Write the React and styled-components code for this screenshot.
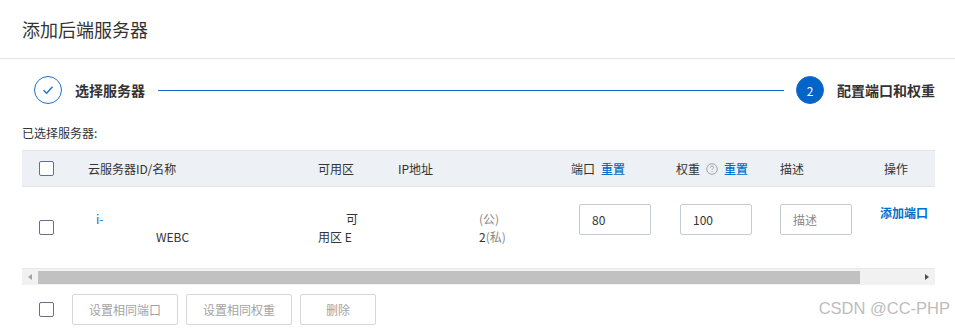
import React from "react";
import styled, { createGlobalStyle } from "styled-components";

const GlobalStyle = createGlobalStyle`
  body {
    margin: 0;
    background: #fff;
    font-family: "Noto Sans CJK SC", "Liberation Sans", sans-serif;
    color: #333;
  }
`;

const Page = styled.div`
  position: relative;
  width: 955px;
  height: 328px;
  overflow: hidden;
`;

const TitleBar = styled.div`
  height: 58px;
  display: flex;
  align-items: center;
  padding-left: 22px;
  border-bottom: 1px solid #e3e3e3;
  font-size: 18px;
  color: #333;
`;

const Content = styled.div`
  padding: 0 20px 0 22px;
`;

const Steps = styled.div`
  display: flex;
  align-items: center;
  height: 28px;
  margin-top: 17px;
  padding-left: 12px;
`;

const StepCircle = styled.div`
  width: 28px;
  height: 28px;
  box-sizing: border-box;
  border-radius: 50%;
  border: 1px solid #1a6fce;
  background: ${(p) => (p.$active ? "#0064c8" : "#fff")};
  color: #fff;
  font-size: 12px;
  display: flex;
  align-items: center;
  justify-content: center;
  flex-shrink: 0;
`;

const StepLabel = styled.span`
  margin-left: 13px;
  font-size: 14px;
  font-weight: 600;
  color: #333;
  white-space: nowrap;
`;

const StepLine = styled.div`
  flex: 1;
  height: 1px;
  background: #0a6cc8;
  margin: 0 12px 0 13px;
`;

const Caption = styled.div`
  margin-top: 20px;
  font-size: 12px;
  line-height: 18px;
`;

const Table = styled.div`
  margin-top: 8px;
`;

const Row = styled.div`
  display: grid;
  grid-template-columns: 58px 230px 80px 173px 105px 104px 100px 63px;
  height: ${(p) => (p.$head ? "37px" : "81px")};
  box-sizing: border-box;
  background: ${(p) => (p.$head ? "#edf0f5" : "#fff")};
  border-top: ${(p) => (p.$head ? "1px solid #e2e6eb" : "none")};
  border-bottom: ${(p) => (p.$head ? "1px solid #e2e6eb" : "none")};
  font-size: 12px;
`;

const Cell = styled.div`
  display: flex;
  flex-direction: column;
  justify-content: ${(p) => (p.$top ? "flex-start" : "center")};
  padding-top: ${(p) => (p.$top ? "17px" : "0")};
  padding-left: ${(p) => p.$pad || 8}px;
  white-space: nowrap;
`;

const HeadCell = styled.div`
  display: flex;
  align-items: center;
  padding-left: ${(p) => p.$pad || 8}px;
  gap: 6px;
  white-space: nowrap;
  color: #333;
`;

const Checkbox = styled.span`
  display: block;
  width: 15px;
  height: 15px;
  box-sizing: border-box;
  border: 1px solid #5e7190;
  border-radius: 2px;
  background: #fff;
  margin-left: 17px;
`;

const CheckCell = styled.div`
  display: flex;
  align-items: center;
`;

const Link = styled.span`
  color: #0070cc;
  font-weight: ${(p) => (p.$bold ? 700 : 500)};
  cursor: pointer;
`;

const Line = styled.div`
  line-height: 18px;
  padding-left: ${(p) => p.$indent || 0}px;
  color: ${(p) => p.$color || "#333"};
`;

const Muted = styled.span`
  color: #888;
`;

const Input = styled.input`
  width: 72px;
  height: 31px;
  box-sizing: border-box;
  border: 1px solid #c5ccd6;
  border-radius: 2px;
  padding: 0 12px;
  font-size: 12px;
  font-family: inherit;
  color: #333;
  outline: none;
  &::placeholder {
    color: #888;
  }
`;

const ScrollBar = styled.div`
  display: flex;
  height: 17px;
  background: #f1f1f1;
  border-top: 1px solid #e8e8e8;
  box-sizing: border-box;
`;

const ScrollArrow = styled.div`
  width: 16px;
  display: flex;
  align-items: center;
  justify-content: center;
  &::after {
    content: "";
    border-top: 3px solid transparent;
    border-bottom: 3px solid transparent;
    ${(p) =>
      p.$right
        ? "border-left: 4px solid #505050;"
        : "border-right: 4px solid #a3a3a3;"}
  }
`;

const ScrollTrack = styled.div`
  flex: 1;
  display: flex;
  align-items: center;
`;

const Thumb = styled.div`
  width: 822px;
  height: 13px;
  background: #c1c1c1;
`;

const Footer = styled.div`
  display: flex;
  align-items: center;
  margin-top: 9px;
  gap: 8px;
`;

const FooterCheck = styled(Checkbox)`
  margin-right: 10px;
`;

const GhostButton = styled.button`
  width: ${(p) => p.$w}px;
  height: 31px;
  border: 1px solid #d7d7d7;
  border-radius: 2px;
  background: #fff;
  color: #a3a3a3;
  font-size: 12px;
  font-family: inherit;
  padding: 0;
`;

const Watermark = styled.div`
  position: absolute;
  right: 5px;
  top: 299px;
  font-family: "Liberation Sans", sans-serif;
  font-size: 16.5px;
  color: #bdbdbd;
  white-space: nowrap;
`;

const CheckIcon = () => (
  <svg width="12" height="10" viewBox="0 0 12 10" fill="none">
    <path d="M1.5 5.2 L4.6 8.2 L10.5 1.8" stroke="#1a6fce" strokeWidth="1.4" />
  </svg>
);

const HelpIcon = () => (
  <svg width="12" height="12" viewBox="0 0 12 12" fill="none">
    <circle cx="6" cy="6" r="5.3" stroke="#9a9a9a" strokeWidth="0.9" />
    <path
      d="M4.4 4.6 C4.4 3.6 5.1 3.1 6 3.1 C6.9 3.1 7.6 3.6 7.6 4.4 C7.6 5.4 6.1 5.5 6.1 6.8"
      stroke="#9a9a9a"
      strokeWidth="0.9"
    />
    <circle cx="6.1" cy="8.6" r="0.55" fill="#9a9a9a" />
  </svg>
);

export default function App() {
  return (
    <Page>
      <GlobalStyle />
      <TitleBar>添加后端服务器</TitleBar>
      <Content>
        <Steps>
          <StepCircle>
            <CheckIcon />
          </StepCircle>
          <StepLabel>选择服务器</StepLabel>
          <StepLine />
          <StepCircle $active>2</StepCircle>
          <StepLabel>配置端口和权重</StepLabel>
        </Steps>

        <Caption>已选择服务器:</Caption>

        <Table>
          <Row $head>
            <CheckCell>
              <Checkbox />
            </CheckCell>
            <HeadCell>云服务器ID/名称</HeadCell>
            <HeadCell>可用区</HeadCell>
            <HeadCell>IP地址</HeadCell>
            <HeadCell>
              端口 <Link>重置</Link>
            </HeadCell>
            <HeadCell>
              权重 <HelpIcon /> <Link>重置</Link>
            </HeadCell>
            <HeadCell>描述</HeadCell>
            <HeadCell $pad={12}>操作</HeadCell>
          </Row>

          <Row>
            <CheckCell>
              <Checkbox />
            </CheckCell>
            <Cell>
              <Line $indent={8} $color="#0070cc">i-</Line>
              <Line $indent={68}>WEBC</Line>
            </Cell>
            <Cell>
              <Line $indent={28}>可</Line>
              <Line>用区 E</Line>
            </Cell>
            <Cell $pad={89}>
              <Line>
                <Muted>(公)</Muted>
              </Line>
              <Line>
                2<Muted>(私)</Muted>
              </Line>
            </Cell>
            <Cell $top $pad={16}>
              <Input defaultValue="80" />
            </Cell>
            <Cell $top $pad={12}>
              <Input defaultValue="100" />
            </Cell>
            <Cell $top>
              <Input placeholder="描述" />
            </Cell>
            <Cell $top $pad={8}>
              <Line>
                <Link $bold>添加端口</Link>
              </Line>
            </Cell>
          </Row>
        </Table>

        <ScrollBar>
          <ScrollArrow />
          <ScrollTrack>
            <Thumb />
          </ScrollTrack>
          <ScrollArrow $right />
        </ScrollBar>

        <Footer>
          <FooterCheck />
          <GhostButton $w={106}>设置相同端口</GhostButton>
          <GhostButton $w={106}>设置相同权重</GhostButton>
          <GhostButton $w={76}>删除</GhostButton>
        </Footer>
      </Content>
      <Watermark>CSDN @CC-PHP</Watermark>
    </Page>
  );
}
